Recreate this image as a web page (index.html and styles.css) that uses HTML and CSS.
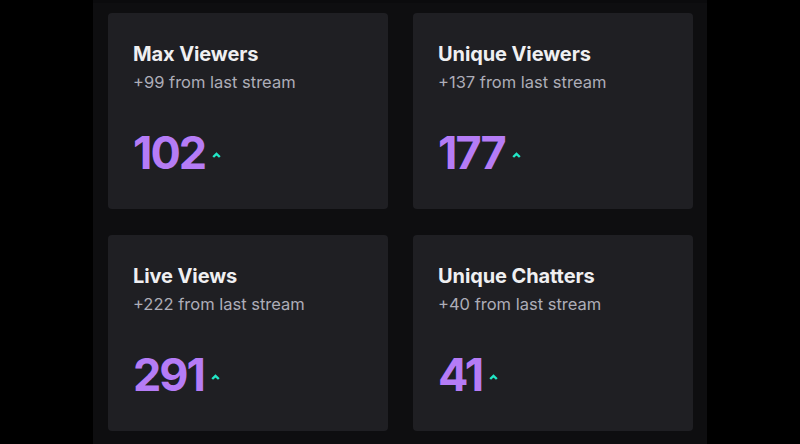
FILE: index.html
```html
<!DOCTYPE html>
<html lang="en">
<head>
<meta charset="utf-8">
<title>Stream stats</title>
<link rel="stylesheet" href="styles.css">
</head>
<body>
<main class="panel">
  <section class="card">
    <h2 class="card-title">Max Viewers</h2>
    <p class="card-sub">+99 from last stream</p>
    <div class="stat"><span class="stat-value">102</span><svg class="caret" width="9" height="6" viewBox="0 0 9 6"><path d="M1.2 5 L4.5 1.8 L7.8 5" fill="none" stroke="currentColor" stroke-width="2.4"/></svg></div>
  </section>
  <section class="card">
    <h2 class="card-title">Unique Viewers</h2>
    <p class="card-sub">+137 from last stream</p>
    <div class="stat"><span class="stat-value">177</span><svg class="caret" width="9" height="6" viewBox="0 0 9 6"><path d="M1.2 5 L4.5 1.8 L7.8 5" fill="none" stroke="currentColor" stroke-width="2.4"/></svg></div>
  </section>
  <section class="card">
    <h2 class="card-title">Live Views</h2>
    <p class="card-sub">+222 from last stream</p>
    <div class="stat"><span class="stat-value">291</span><svg class="caret" width="9" height="6" viewBox="0 0 9 6"><path d="M1.2 5 L4.5 1.8 L7.8 5" fill="none" stroke="currentColor" stroke-width="2.4"/></svg></div>
  </section>
  <section class="card">
    <h2 class="card-title">Unique Chatters</h2>
    <p class="card-sub">+40 from last stream</p>
    <div class="stat"><span class="stat-value">41</span><svg class="caret" width="9" height="6" viewBox="0 0 9 6"><path d="M1.2 5 L4.5 1.8 L7.8 5" fill="none" stroke="currentColor" stroke-width="2.4"/></svg></div>
  </section>
</main>
</body>
</html>
```

FILE: styles.css
```css
html, body {
  margin: 0;
  padding: 0;
  background: #000;
  height: 100%;
}
body {
  display: flex;
  justify-content: center;
  font-family: "Inter", "Noto Sans", sans-serif;
}
.panel {
  box-sizing: border-box;
  width: 614px;
  background: #0e0e10;
  border-top: 3px solid #0b0b0d;
  padding: 10px 14px 0 15px;
  display: grid;
  grid-template-columns: 280px 280px;
  grid-auto-rows: 196px;
  gap: 26px 25px;
  align-content: start;
}
.card {
  background: #1f1f23;
  border-radius: 4px;
  padding: 29px 25px 0 25px;
  box-sizing: border-box;
}
.card-title {
  margin: 0;
  font-size: 20px;
  line-height: 24px;
  font-weight: 700;
  color: #efeff1;
  letter-spacing: -0.1px;
}
.card-sub {
  margin: 6px 0 0 0;
  font-size: 16.5px;
  line-height: 20px;
  font-weight: 400;
  color: #adadb8;
}
.stat {
  margin-top: 37px;
  display: flex;
  align-items: flex-start;
  gap: 7px;
}
.stat-value {
  font-size: 45px;
  line-height: 48px;
  font-weight: 700;
  color: #b57cf6;
  letter-spacing: -2px;
}
.caret {
  color: #22e6c6;
  margin-top: 23px;
}
```
